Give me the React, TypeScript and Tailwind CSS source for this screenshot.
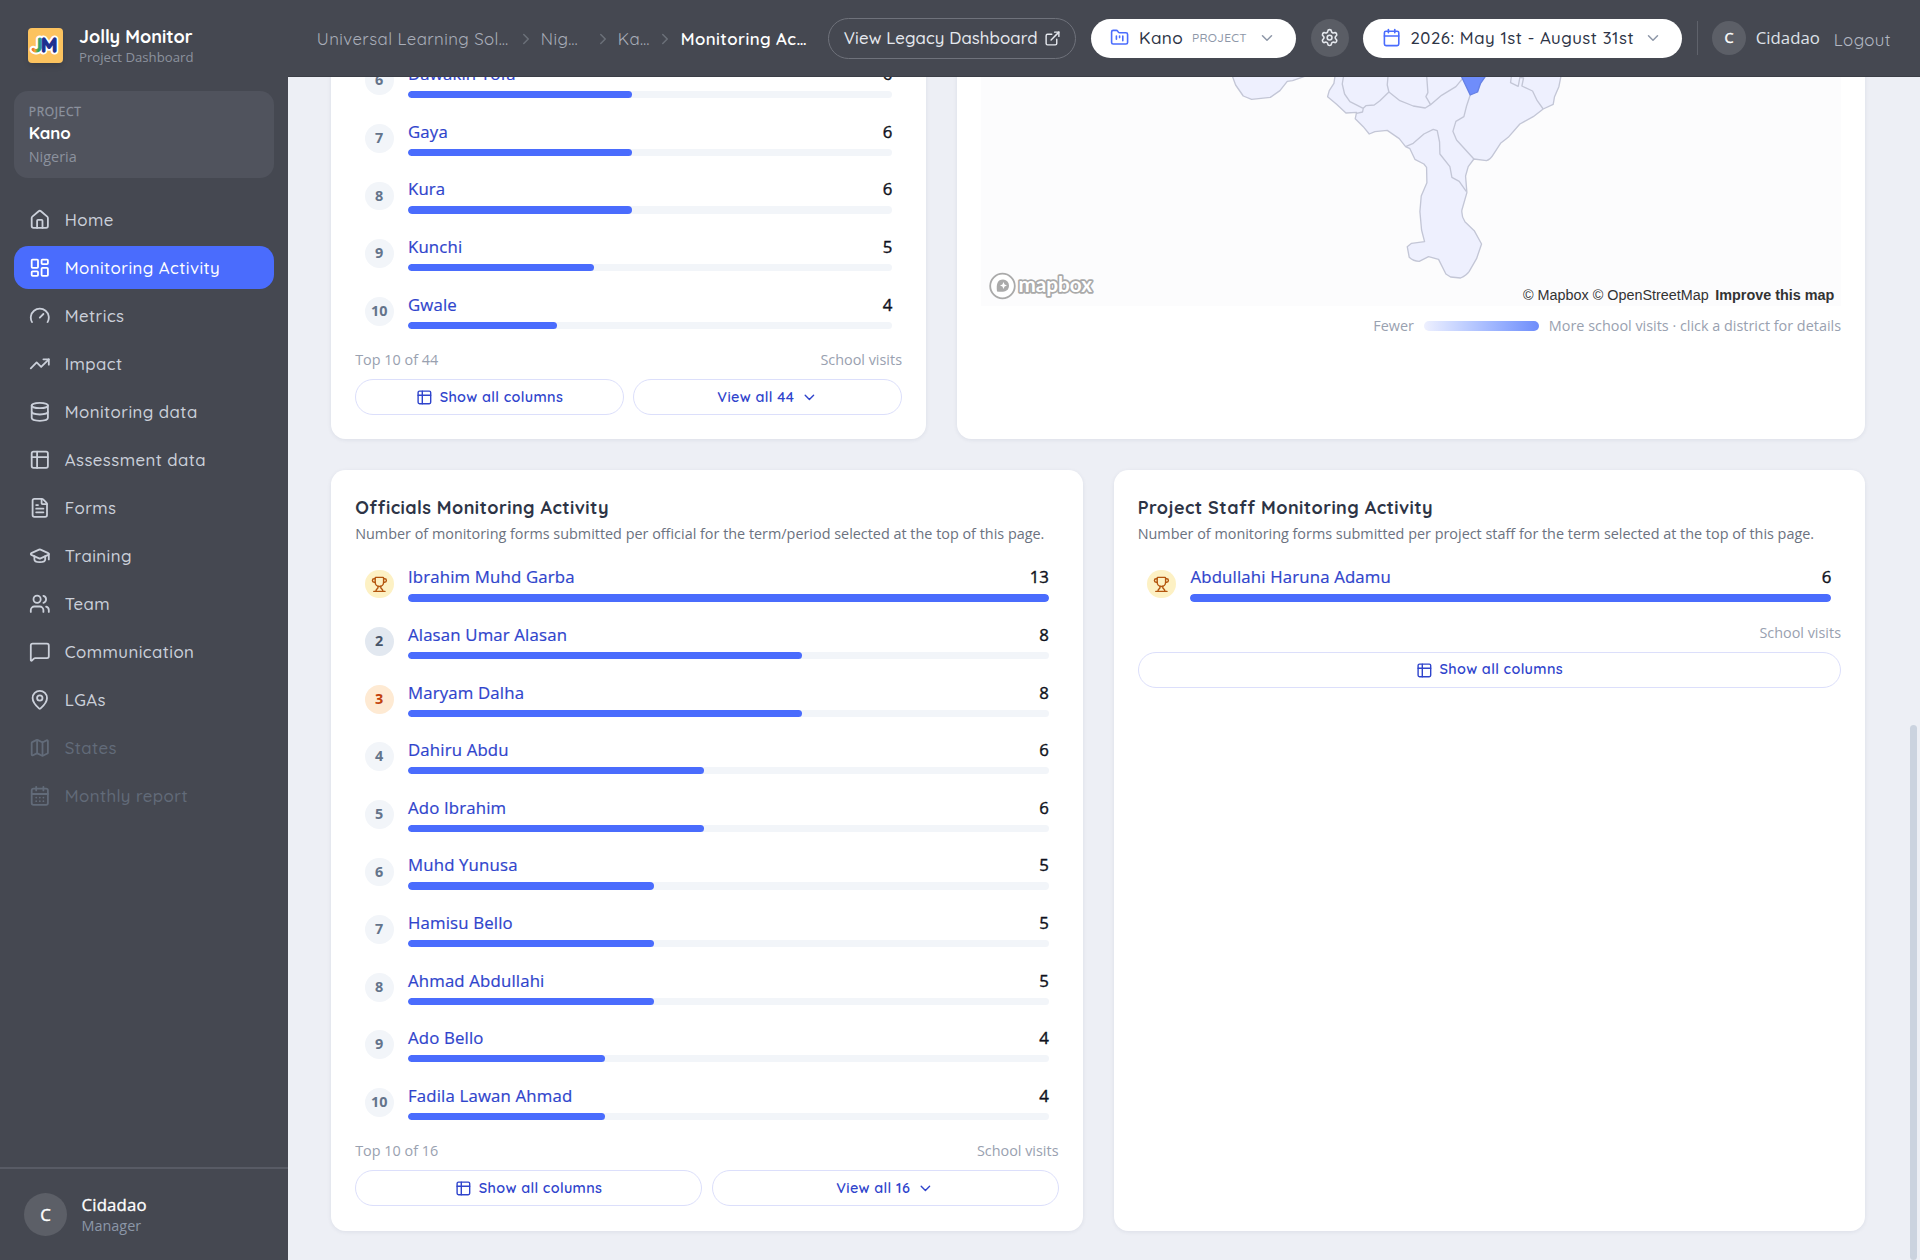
import {
  Calendar,
  CalendarDays,
  ChevronDown,
  ChevronRight,
  Database,
  ExternalLink,
  FileText,
  FolderKanban,
  Gauge,
  GraduationCap,
  House,
  LayoutDashboard,
  Map,
  MapPin,
  MessageSquare,
  Settings,
  TrendingUp,
  Trophy,
  Users,
} from "lucide-react"
import clsx from "clsx"
import type { ComponentType } from "react"

interface NavItem {
  label: string
  icon: ComponentType<{ className?: string }>
  active?: boolean
  disabled?: boolean
}

interface Entry {
  rank: number
  name: string
  visits: number
}

const TableIcon = ({ className }: { className?: string }) => (
  <svg
    viewBox="0 0 24 24"
    fill="none"
    stroke="currentColor"
    strokeWidth="2"
    strokeLinecap="round"
    strokeLinejoin="round"
    className={className}
  >
    <rect x="3" y="3" width="18" height="18" rx="2" />
    <path d="M3 9h18M9 3v18" />
  </svg>
)

const navItems: NavItem[] = [
  { label: "Home", icon: House },
  { label: "Monitoring Activity", icon: LayoutDashboard, active: true },
  { label: "Metrics", icon: Gauge },
  { label: "Impact", icon: TrendingUp },
  { label: "Monitoring data", icon: Database },
  { label: "Assessment data", icon: TableIcon },
  { label: "Forms", icon: FileText },
  { label: "Training", icon: GraduationCap },
  { label: "Team", icon: Users },
  { label: "Communication", icon: MessageSquare },
  { label: "LGAs", icon: MapPin },
  { label: "States", icon: Map, disabled: true },
  { label: "Monthly report", icon: CalendarDays, disabled: true },
]

const districts: Entry[] = [
  { rank: 6, name: "Dawakin Tofa", visits: 6 },
  { rank: 7, name: "Gaya", visits: 6 },
  { rank: 8, name: "Kura", visits: 6 },
  { rank: 9, name: "Kunchi", visits: 5 },
  { rank: 10, name: "Gwale", visits: 4 },
]

const officials: Entry[] = [
  { rank: 1, name: "Ibrahim Muhd Garba", visits: 13 },
  { rank: 2, name: "Alasan Umar Alasan", visits: 8 },
  { rank: 3, name: "Maryam Dalha", visits: 8 },
  { rank: 4, name: "Dahiru Abdu", visits: 6 },
  { rank: 5, name: "Ado Ibrahim", visits: 6 },
  { rank: 6, name: "Muhd Yunusa", visits: 5 },
  { rank: 7, name: "Hamisu Bello", visits: 5 },
  { rank: 8, name: "Ahmad Abdullahi", visits: 5 },
  { rank: 9, name: "Ado Bello", visits: 4 },
  { rank: 10, name: "Fadila Lawan Ahmad", visits: 4 },
]

const staff: Entry[] = [{ rank: 1, name: "Abdullahi Haruna Adamu", visits: 6 }]

function Logo() {
  return (
    <svg width="35" height="35" viewBox="0 0 35 35" className="shrink-0 rounded-[4px] shadow-md">
      <defs>
        <linearGradient id="jolly" x1="0" y1="0" x2="1" y2="0">
          <stop offset="0" stopColor="#e8452c" />
          <stop offset="0.3" stopColor="#f3a72e" />
          <stop offset="0.6" stopColor="#35a853" />
          <stop offset="1" stopColor="#2a7fd8" />
        </linearGradient>
      </defs>
      <rect width="35" height="35" fill="#fcc35f" />
      <g fontFamily="Quicksand, Lato, sans-serif" fontWeight="700" fontSize="20" strokeLinejoin="round" strokeLinecap="round">
        <g fill="#ffffff" stroke="#ffffff" strokeWidth="5" aria-hidden="true">
          <text x="3.5" y="24">J</text>
          <text x="13" y="24">M</text>
        </g>
        <text x="3.5" y="24" fill="url(#jolly)" stroke="url(#jolly)" strokeWidth="1">J</text>
        <text x="13" y="24" fill="#1d2f8f" stroke="#1d2f8f" strokeWidth="1.3">M</text>
      </g>
    </svg>
  )
}

function Sidebar() {
  return (
    <aside className="flex w-72 shrink-0 flex-col bg-[#454851]">
      <div className="flex h-[91px] items-center gap-4 pl-7">
        <Logo />
        <div className="mt-[2px]">
          <p className="font-[Quicksand,Lato,sans-serif] text-[18px] leading-[21px] font-bold text-white">
            Jolly Monitor
          </p>
          <p className="text-[13.2px] leading-[20px] text-[#8c929e]">Project Dashboard</p>
        </div>
      </div>

      <div className="mx-[14.4px] h-[87px] rounded-[14px] bg-[#50535d] px-[14.4px] pt-[11px]">
        <p className="text-[12px] leading-[19px] tracking-[0.66px] text-[#8c929e] [-webkit-text-stroke:0.3px]">PROJECT</p>
        <p className="font-[Quicksand,Lato,sans-serif] text-[16.8px] leading-[23px] font-bold text-white">Kano</p>
        <p className="text-[14.4px] leading-[26px] text-[#8c929e]">Nigeria</p>
      </div>

      <nav className="mt-5 flex flex-col gap-[4.8px] px-[14.4px]">
        {navItems.map(({ label, icon: Icon, active, disabled }) => (
          <a
            key={label}
            className={clsx(
              "flex h-[43.2px] items-center gap-[14.4px] rounded-[14.4px] pl-[14.4px] font-[Quicksand,Lato,sans-serif] text-[16.8px] font-medium tracking-[0.44px]",
              active && "bg-[#4a6cfd] text-white",
              disabled && "text-[#626b79]",
              !active && !disabled && "text-[#cbd0da]"
            )}
          >
            <Icon className="size-[21.6px]" />
            {label}
          </a>
        ))}
      </nav>

      <div className="mt-auto flex h-[93px] items-center gap-[14.4px] border-t-2 border-[#585b65] pl-6">
        <div className="flex size-[43.2px] items-center justify-center rounded-full bg-[#5c5f67] text-[16.8px] text-white [-webkit-text-stroke:0.4px]">
          C
        </div>
        <div>
          <p className="text-[16.8px] leading-[22px] tracking-[0.15px] text-white [-webkit-text-stroke:0.3px]">Cidadao</p>
          <p className="text-[14.4px] leading-[20px] text-[#8c97a8]">Manager</p>
        </div>
      </div>
    </aside>
  )
}

function Header() {
  return (
    <header className="z-10 flex h-[77px] shrink-0 items-center border-b border-[#3b3e46] bg-[#454851] pl-[28.8px] font-[Quicksand,Lato,sans-serif] text-[16.8px] tracking-[0.4px]">
      <div className="flex w-[511px] shrink-0 items-center pt-px whitespace-nowrap text-[#a9aeb9]">
        <span className="w-[200px]">Universal Learning Sol…</span>
        <ChevronRight className="mr-[6px] size-[18px] text-[#6b7079]" />
        <span className="w-[53px]">Nig…</span>
        <ChevronRight className="mr-[6px] size-[18px] text-[#6b7079]" />
        <span className="w-[38px]">Ka…</span>
        <ChevronRight className="mr-[7px] size-[18px] text-[#6b7079]" />
        <span className="font-semibold tracking-[0.42px] text-white">Monitoring Ac…</span>
      </div>

      <button className="flex h-[41px] w-[248px] items-center gap-[6px] rounded-full border border-[#6f727b] pl-[15px] text-[#e5e8ee]">
        <span className="w-[194px] text-left font-medium tracking-[0.1px] whitespace-nowrap">View Legacy Dashboard</span>
        <ExternalLink className="size-[17px]" />
      </button>

      <button className="ml-[15px] flex h-[39px] w-[205px] items-center rounded-full bg-white pl-[19px] text-[#2d3446]">
        <FolderKanban className="size-[19.2px] text-[#4a6cfd]" />
        <span className="ml-[10px] w-[53px] text-left text-[17.2px] font-medium">Kano</span>
        <span className="w-[66px] text-left text-[12px] font-medium tracking-[0.3px] text-[#8e97a8]">PROJECT</span>
        <ChevronDown className="size-[18px] text-[#8e97a8]" />
      </button>

      <button className="ml-[15px] flex size-[38.4px] items-center justify-center rounded-full bg-[#5a5d65] text-[#e5e8ee]">
        <Settings className="size-[19.2px]" />
      </button>

      <button className="ml-[14px] flex h-[39px] w-[319px] items-center rounded-full bg-white pl-[19px] text-[#2d3446]">
        <Calendar className="size-[19.2px] text-[#4a6cfd]" />
        <span className="ml-[9px] w-[234px] text-left font-medium tracking-[0.55px] whitespace-nowrap">
          2026: May 1st - August 31st
        </span>
        <ChevronDown className="size-[18px] text-[#8e97a8]" />
      </button>

      <div className="ml-[15px] flex h-[34px] items-center border-l border-[#5f626b] pl-[14px]">
        <div className="flex size-[33.6px] items-center justify-center rounded-full bg-[#5c5f67] font-['Open_Sans',sans-serif] text-[14.4px] tracking-normal text-white [-webkit-text-stroke:0.4px]">
          C
        </div>
        <span className="ml-[10px] w-[78px] font-['Open_Sans',sans-serif] text-[16.8px] tracking-normal text-[#dfe2e8]">
          Cidadao
        </span>
        <span className="mt-[3px] text-[#b3b8c3]">Logout</span>
      </div>
    </header>
  )
}

function Rank({ rank }: { rank: number }) {
  return (
    <div
      className={clsx(
        "flex size-[28.8px] shrink-0 items-center justify-center rounded-full text-[14.4px] font-bold",
        rank === 1 && "bg-[#fdf1c4] text-[#b4560e]",
        rank === 2 && "bg-[#e2e8f0] text-[#475569]",
        rank === 3 && "bg-[#feead3] text-[#c2410c]",
        rank > 3 && "bg-[#f2f5f9] text-[#64748b]"
      )}
    >
      {rank === 1 ? <Trophy className="size-[16.8px]" /> : <span className="pb-px">{rank}</span>}
    </div>
  )
}

function Leaderboard({ entries, max, total }: { entries: Entry[]; max: number; total?: number }) {
  return (
    <>
      {entries.map(({ rank, name, visits }) => (
        <div key={rank} className="flex h-[57.6px] items-center gap-[14.4px] px-[9.6px]">
          <Rank rank={rank} />
          <div className="flex-1">
            <div className="flex justify-between text-[16.8px] leading-[21px]">
              <span className="tracking-[0.16px] text-[#2f44cc] [-webkit-text-stroke:0.2px]">{name}</span>
              <span className="text-[#0f1220] [-webkit-text-stroke:0.4px]">{visits}</span>
            </div>
            <div className="mt-[7px] h-[7.2px] overflow-hidden rounded-full bg-[#f2f5f9]">
              <div className="h-full rounded-full bg-[#4a6cfd]" style={{ width: `${(visits / max) * 100}%` }} />
            </div>
          </div>
        </div>
      ))}

      <div className="mt-[9px] flex h-[22px] items-center justify-between text-[14.4px] text-[#99a1b0]">
        <span>{total ? `Top 10 of ${total}` : ""}</span>
        <span>School visits</span>
      </div>

      <div className="mt-[8px] flex gap-[9.6px] font-[Quicksand,Lato,sans-serif] text-[14.4px] font-semibold tracking-[0.35px] text-[#2f44cc]">
        <button className="flex h-9 flex-1 items-center justify-center gap-[7px] rounded-full border border-[#dcdffb] pt-px">
          <TableIcon className="size-[16.8px]" />
          Show all columns
        </button>
        {total && (
          <button className="flex h-9 flex-1 items-center justify-center gap-[7px] rounded-full border border-[#dcdffb] pt-px">
            View all {total}
            <ChevronDown className="size-[16.8px]" />
          </button>
        )}
      </div>
    </>
  )
}

function CardHeading({ title, description }: { title: string; description: string }) {
  return (
    <div className="h-[61px] pt-px">
      <h2 className="font-[Quicksand,Lato,sans-serif] text-[18px] leading-[25px] font-bold tracking-[0.45px] text-[#2d3446]">
        {title}
      </h2>
      <p className="mt-[2px] text-[14.4px] leading-[24px] whitespace-nowrap text-[#6b7280]">{description}</p>
    </div>
  )
}

function DistrictMap() {
  return (
    <svg viewBox="981 52 860 254" className="h-[254px] w-full bg-[#fcfcfd]" preserveAspectRatio="none">
      <g
        transform="translate(1200 70) scale(0.33333)"
        fill="#eef0fe"
        stroke="#c3c6d6"
        strokeWidth="4"
        strokeLinejoin="round"
      >
        <path d="M98 20L107 45L130 78L155 88L211 82L240 62L262 34L278 32L312 20V0H98Z" />
        <path d="M405 0V20L402 40L388 62L383 80L410 103L438 129L470 127L466 146L490 170L508 192L525 185L562 181L598 206L617 230L630 236L645 268L672 282L680 292L681 338L664 378L660 425L665 480L674 515L635 520L622 530L628 562Q640 574 658 574L686 560L716 568L738 612L752 621L782 624Q800 616 808 604L830 566L845 522L823 482L795 455Q784 438 786 420L801 368L797 318L805 290L822 267L860 272Q872 268 880 254L902 220L925 202L960 162L1000 140L1030 117L1060 103L1064 80L1077 50L1083 20V0Z" />
        <g fill="none">
          <path d="M434 0L427 42L434 72L450 95L490 115L488 126L470 130" />
          <path d="M490 115L498 107L523 105L540 92L567 66L562 45L566 0" />
          <path d="M567 66L600 92L640 108L676 114L692 104L678 80L684 68L679 0" />
          <path d="M692 104L725 76L768 50L788 26" />
          <path d="M617 230L640 220L672 192L700 178L712 182L719 216L720 252L750 290L756 322L778 334L799 364" />
          <path d="M811 75L800 108L792 140L768 154L759 184L770 210L822 267" />
          <path d="M937 0L932 38L955 49L960 22L971 24L966 48L998 63L1012 92L1030 117" />
        </g>
        <path d="M778 0L785 20L811 75L833 66L842 40L856 20V0Z" fill="#6f8dfb" stroke="#6580e4" />
      </g>

      <circle cx="1002.500" cy="286" r="12.3" fill="#ffffff" stroke="#aaaaaa" strokeWidth="1.8" />
      <path d="M997 291.500C996 284 997.500 279.500 1003 279.500A6 6 0 0 1 1009 285.500C1009 291 1004.500 292.500 997 291.500Z" fill="#aaaaaa" />
      <path d="M1003.500 282l1.100 2.400 2.400 1.100-2.400 1.100-1.100 2.400-1.100-2.400-2.400-1.100 2.400-1.100Z" fill="#ffffff" />
      <text
        x="1018.500"
        y="292"
        fontFamily="Lato, sans-serif"
        fontWeight="700"
        fontSize="21"
        fill="#ffffff"
        stroke="#aaaaaa"
        strokeWidth="3.4"
        strokeLinejoin="round"
        paintOrder="stroke"
        textLength="73.500"
        lengthAdjust="spacingAndGlyphs"
      >
        mapbox
      </text>
      <text
        x="1834.500"
        y="300"
        textAnchor="end"
        fontFamily="Liberation Sans, Arial, sans-serif"
        fontSize="14.4"
        fill="#333333"
      >
        © Mapbox © OpenStreetMap
        <tspan dx="6.500" fontWeight="700">Improve this map</tspan>
      </text>
    </svg>
  )
}

const card = "rounded-[14.4px] bg-white p-6 shadow-[0_1px_4px_rgba(30,41,80,0.08)]"

export default function App() {
  return (
    <div className="flex h-[1260px] w-[1920px] overflow-hidden bg-[#edeff5] font-['Open_Sans',sans-serif]">
      <Sidebar />
      <div className="flex min-w-0 flex-1 flex-col">
        <Header />
        <div className="flex min-h-0 flex-1">
          <main className="-mt-[49px] flex-1 pr-[45px] pl-[43.2px]">
            <div className="grid h-[411px] grid-cols-5 gap-[31.2px]">
              <section className={clsx(card, "col-span-2")}>
                <Leaderboard entries={districts} max={13} total={44} />
              </section>
              <section className={clsx(card, "col-span-3")}>
                <DistrictMap />
                <div className="mt-[9px] flex h-[22px] items-center justify-end gap-[10px] text-[14.4px] text-[#99a1b0]">
                  <span>Fewer</span>
                  <div className="h-[9.6px] w-[115px] rounded-full bg-gradient-to-r from-[#eef0fe] to-[#6f8dfb]" />
                  <span>More school visits · click a district for details</span>
                </div>
              </section>
            </div>

            <div className="mt-[31.2px] grid h-[760.500px] grid-cols-2 gap-[31.2px]">
              <section className={card}>
                <CardHeading
                  title="Officials Monitoring Activity"
                  description="Number of monitoring forms submitted per official for the term/period selected at the top of this page."
                />
                <Leaderboard entries={officials} max={13} total={16} />
              </section>
              <section className={card}>
                <CardHeading
                  title="Project Staff Monitoring Activity"
                  description="Number of monitoring forms submitted per project staff for the term selected at the top of this page."
                />
                <Leaderboard entries={staff} max={6} />
              </section>
            </div>
          </main>
          <div className="w-[10px] pt-[648px]">
            <div className="h-[535px] w-[7px] rounded-full bg-[#cbd3df]" />
          </div>
        </div>
      </div>
    </div>
  )
}
